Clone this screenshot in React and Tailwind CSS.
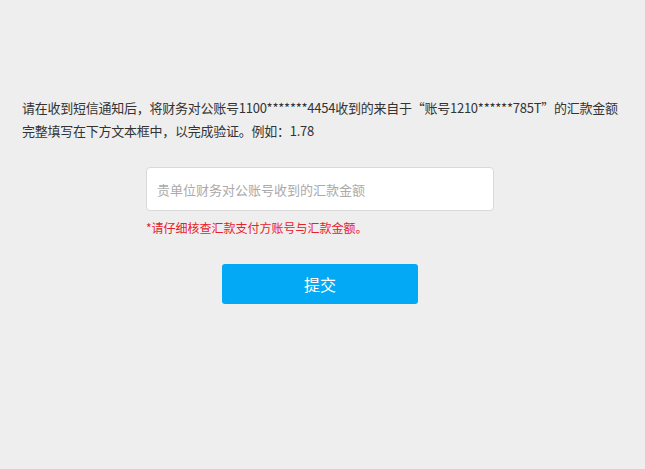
export default function App() {
  return (
    <div
      className="min-h-[469px] w-full bg-[#eeeeee] text-[#333333]"
      style={{ fontFamily: '"Microsoft YaHei", "Noto Sans CJK SC", "Noto Sans", sans-serif' }}
    >
      <div className="w-[640px] pt-[96px]">
        <p className="px-[22px] text-[13px] leading-[23px] tracking-[-0.25px] whitespace-nowrap">
          请在收到短信通知后，将财务对公账号1100*******4454收到的来自于“账号1210******785T”的汇款金额
          <br />
          完整填写在下方文本框中，以完成验证。例如：1.78
        </p>
        <div className="mt-[25px] flex flex-col items-center">
          <div className="w-[348px]">
            <input
              type="text"
              placeholder="贵单位财务对公账号收到的汇款金额"
              className="h-[44px] w-full rounded-[4px] border border-[#d9d9d9] bg-white px-[10px] text-[13px] text-[#333] outline-none placeholder:text-[#aaaaaa]"
            />
            <p className="mt-[7px] text-[12px] leading-[20px] text-[#e8202a]">
              *请仔细核查汇款支付方账号与汇款金额。
            </p>
          </div>
          <button className="mt-[26px] h-[40px] w-[196px] rounded-[3px] bg-[#03a9f4] text-[16px] text-white">
            提交
          </button>
        </div>
      </div>
    </div>
  );
}
